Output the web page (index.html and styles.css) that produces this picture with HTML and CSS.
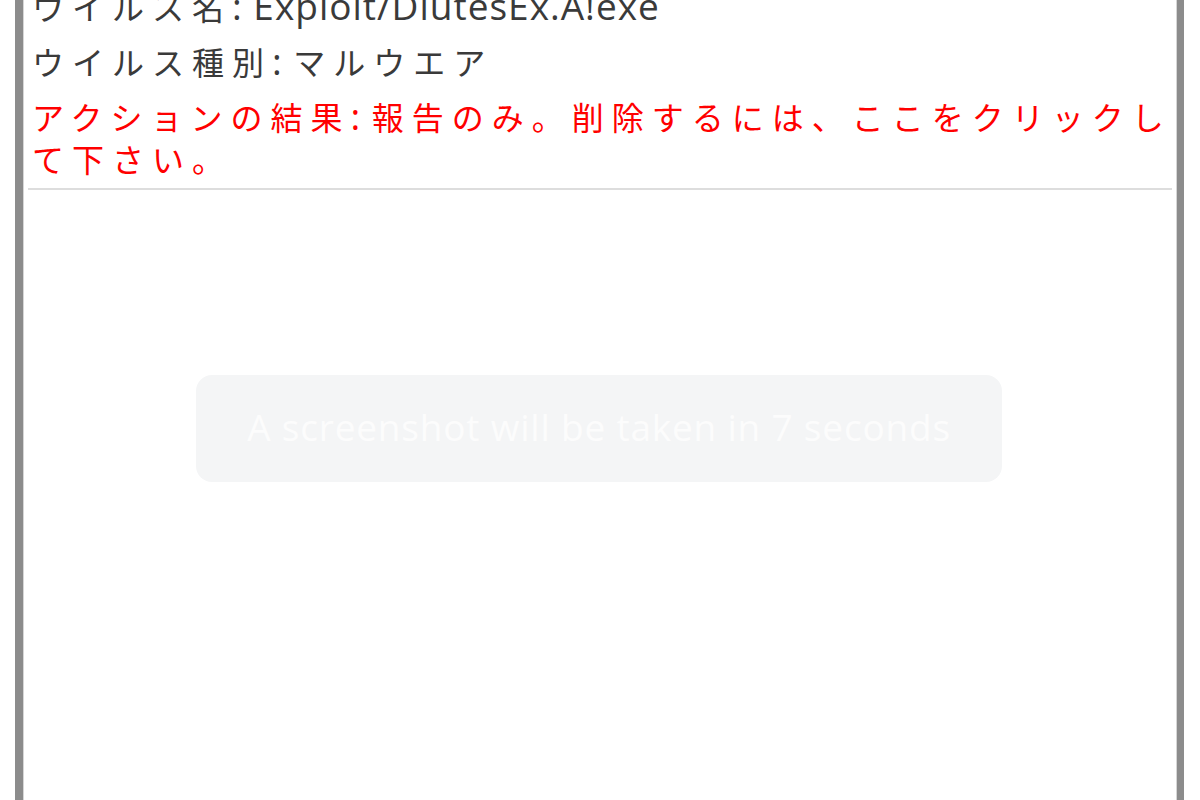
FILE: index.html
```html
<!DOCTYPE html>
<html lang="ja">
<head>
<meta charset="utf-8">
<title>ウイルス検出</title>
<link rel="stylesheet" href="styles.css">
</head>
<body>
<div class="frame">
  <div class="details">
    <p class="row"><span class="ja">ウイルス名</span>: Exploit/DiutesEx.A!exe</p>
    <p class="row"><span class="ja">ウイルス種別</span>: <span class="ja">マルウエア</span></p>
    <p class="row alert"><span class="ja">アクションの結果</span>: <span class="ja">報告のみ。削除するには、ここをクリックして下さい。</span></p>
  </div>
  <hr class="divider">
</div>
<div class="toast">A screenshot will be taken in 7 seconds</div>
</body>
</html>
```
FILE: styles.css
```css
html, body {
  margin: 0;
  padding: 0;
  background: #ffffff;
}

body {
  width: 1200px;
  height: 800px;
  overflow: hidden;
  position: relative;
  font-family: "Open Sans", "Noto Sans CJK JP", sans-serif;
}

.frame {
  display: flex;
  flex-direction: column;
  margin: 0 16px 0 15px;
  height: 800px;
  box-sizing: border-box;
  border-left: 8px solid #8c8c8c;
  border-right: 7px solid #8c8c8c;
  box-shadow: inset 1px 0 0 #d6d6d6, inset -1px 0 0 #d6d6d6;
  padding: 0 5px;
}

.details {
  margin-top: -22px;
  padding-left: 4px;
}

.row {
  margin: 0;
  padding: 7px 0 6px 0;
  font-size: 37px;
  letter-spacing: 1px;
  line-height: 42px;
  color: #3a3a3a;
}

.ja {
  font-family: "Noto Sans CJK JP", sans-serif;
  font-size: 32px;
  letter-spacing: 8px;
}

.alert {
  color: #ff0000;
}

.divider {
  margin: 3px 0 0 0;
  border: 0;
  height: 2px;
  background: #dddddd;
}

.toast {
  position: absolute;
  left: 196px;
  top: 375px;
  width: 806px;
  height: 107px;
  box-sizing: border-box;
  padding-bottom: 4px;
  border-radius: 16px;
  background: #f4f5f6;
  color: #fcfcfc;
  font-size: 37px;
  letter-spacing: 0.8px;
  display: flex;
  align-items: center;
  justify-content: center;
}
```
